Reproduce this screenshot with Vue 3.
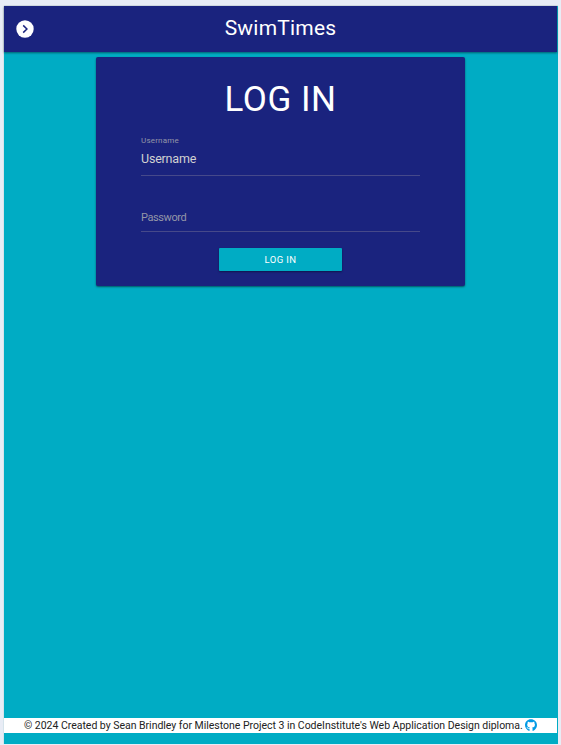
<script setup>
import { ref } from 'vue'

const username = ref('')
const password = ref('')
</script>

<template>
  <div class="page">
    <header class="navbar">
      <button class="menu" aria-label="Open menu">
        <svg viewBox="0 0 18 18" width="18" height="18">
          <circle cx="9" cy="9" r="8.7" fill="#fff" />
          <path d="M7.2 5.4 10.9 9 7.2 12.6" fill="none" stroke="#1a237e" stroke-width="1.5" />
        </svg>
      </button>
      <span class="brand">SwimTimes</span>
    </header>
    <main class="content">
      <form class="card" @submit.prevent>
        <h1 class="title">LOG IN</h1>
        <div class="field first">
          <label class="label" for="username">Username</label>
          <input id="username" v-model="username" class="input" placeholder="Username" />
        </div>
        <div class="field second">
          <input v-model="password" class="input password" type="password" placeholder="Password" />
        </div>
        <button class="submit" type="submit">LOG IN</button>
      </form>
    </main>
    <footer class="footer">
      <span class="credit">© 2024 Created by Sean Brindley for Milestone Project 3 in CodeInstitute's Web Application Design diploma.</span>
      <svg class="github" viewBox="0 0 496 496" width="12" height="12">
        <path fill="#039be5" d="M166 397c0 2-2 4-5 4-4 0-6-2-6-4s2-4 5-4 6 2 6 4zM245 8C106 8 0 113 0 252c0 111 70 206 170 239 13 2 17-6 17-12v-62s-70 15-85-30c0 0-11-29-28-37 0 0-23-16 2-15 0 0 25 2 38 26 22 39 59 28 74 21 2-16 9-27 16-34-56-6-112-14-112-110 0-28 8-41 23-59-2-6-11-33 3-67 21-7 69 27 69 27a236 236 0 0 1 126 0s48-34 69-27c14 34 5 61 3 67 15 18 25 31 25 59 0 96-59 104-115 110 9 8 17 23 17 46v85c0 6 4 14 17 12 99-33 167-128 167-239C496 113 383 8 245 8z" />
      </svg>
    </footer>
  </div>
</template>

<style>
body {
  margin: 0;
  background: #e8ecf5;
}
</style>

<style scoped>
.page {
  box-sizing: border-box;
  display: flex;
  flex-direction: column;
  width: 554px;
  height: 738px;
  margin: 6px 0 0 4px;
  padding-bottom: 11px;
  background: #00acc4;
  font-family: Roboto, "Liberation Sans", sans-serif;
  box-shadow: 0 -1px #d5dee6, -1px 0 #d5e3eb;
}

.navbar {
  display: grid;
  grid-template-columns: 40px 1fr 40px;
  align-items: center;
  width: 553px;
  height: 46px;
  background: #1a237e;
  box-shadow: 0 1px 2px rgba(0, 0, 0, 0.45);
}

.menu {
  display: flex;
  margin: 0 0 0 12px;
  padding: 0;
  border: 0;
  background: none;
}

.brand {
  color: #fff;
  font-size: 21px;
  line-height: 24px;
  letter-spacing: 0.2px;
  text-align: center;
  padding-bottom: 2px;
}

.content {
  flex: 1;
  padding: 5px 0 0 92px;
}

.card {
  box-sizing: border-box;
  display: flex;
  flex-direction: column;
  width: 369px;
  height: 229px;
  padding: 22px 45px 0;
  border-radius: 2px;
  background: #1a237e;
  box-shadow: 0 1px 2px rgba(0, 0, 0, 0.5);
}

.title {
  margin: 0;
  color: #fff;
  font-size: 35px;
  font-weight: 400;
  line-height: 41px;
  letter-spacing: 0.5px;
  text-align: center;
}

.field {
  display: flex;
  flex-direction: column;
  box-sizing: border-box;
  border-bottom: 1px solid #46498a;
}

.first {
  height: 56px;
  padding-top: 16px;
}

.second {
  height: 56px;
  padding-top: 33px;
}

.label {
  color: #9496a8;
  font-size: 8px;
  line-height: 10px;
  letter-spacing: 0.2px;
}

.input {
  width: 100%;
  height: 25px;
  padding: 0;
  border: 0;
  outline: 0;
  background: none;
  color: #d1d1d1;
  font: 12.5px/25px Roboto, sans-serif;
  letter-spacing: -0.2px;
}

.input::placeholder {
  color: #d1d1d1;
  opacity: 1;
}

.password {
  height: 18px;
  font-size: 11px;
  line-height: 18px;
  letter-spacing: -0.4px;
}

.password::placeholder {
  color: #9496a8;
}

.submit {
  align-self: center;
  width: 123px;
  height: 23px;
  margin-top: 16px;
  padding: 1px 0 0;
  border: 0;
  border-radius: 1px;
  background: #00acc4;
  box-shadow: 0 1px 2px rgba(0, 0, 0, 0.4);
  color: #fff;
  font: 400 9.5px/22px Roboto, sans-serif;
  letter-spacing: 0.4px;
}

.footer {
  display: flex;
  align-items: center;
  width: 553px;
  height: 15px;
  padding-left: 20px;
  box-sizing: border-box;
  background: #fff;
  color: #222;
  white-space: nowrap;
}

.credit {
  width: 501px;
  font-size: 10.5px;
  line-height: 15px;
  letter-spacing: -0.02px;
}

.github {
  flex: none;
  margin-bottom: 2px;
}
</style>
